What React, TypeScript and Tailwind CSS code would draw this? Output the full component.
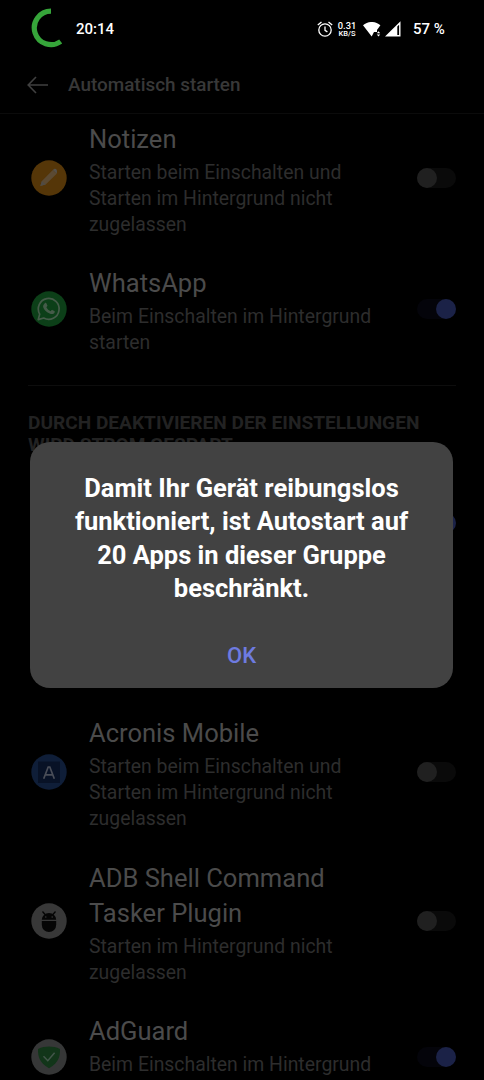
import type { ReactNode } from 'react'

interface AppRow {
  name: string[]
  info: string[]
  enabled: boolean
  icon: ReactNode
}

function NotesIcon() {
  return (
    <svg viewBox="0 0 36 36" className="size-9">
      <circle cx="18" cy="18" r="17.7" fill="#553608" />
      <path d="M9.3 26l1.6-4.9L21.8 10l3.9 3.8-11 10.8z" fill="#5b4a33" />
      <path d="M21.8 10l1.3-1.1c2-.7 3.7 1.1 2.6 4.9z" fill="#54504a" />
      <path d="M9.3 26l1.6-4.9 3.8 3.5z" fill="#4f4b45" />
    </svg>
  )
}

function WhatsAppIcon() {
  return (
    <svg viewBox="0 0 36 36" className="size-9">
      <circle cx="18" cy="18" r="17.7" fill="#0c3f18" />
      <path
        d="M7.2 28.6l1.5-5.5A10.4 10.4 0 1 1 12.7 27z"
        fill="none"
        stroke="#455b49"
        strokeWidth="1.7"
        strokeLinejoin="round"
      />
      <path
        d="M13.8 12.2c.5-.5 1.4-.5 1.7.2l.9 2.1c.2.5-.6 1.2-1 1.7.9 1.8 2.4 3.2 4.3 4 .5-.5 1.1-1.5 1.6-1.3l2.1 1c.7.4.3 1.7-.3 2.3-1 1-2.4 1.1-4 .6-3.6-1.2-6-3.7-6.9-6.5-.4-1.5.3-3 1.6-4.1z"
        fill="#455b49"
      />
    </svg>
  )
}

function AcronisIcon() {
  return (
    <svg viewBox="0 0 36 36" className="size-9">
      <circle cx="18" cy="18" r="17.7" fill="#0f1e38" />
      <rect x="7" y="7.5" width="22" height="21.5" fill="#081226" />
      <path
        d="M12.7 24.8L17.2 13h1.6l4.5 11.8M14 20.8h8"
        fill="none"
        stroke="#4a4e58"
        strokeWidth="1.7"
      />
    </svg>
  )
}

function AdbIcon() {
  return (
    <svg viewBox="0 0 36 36" className="size-9">
      <circle cx="18" cy="18" r="17.7" fill="#383838" />
      <path d="M11.5 8.5l3 3.5M24.5 8.5l-3 3.5" stroke="#050505" strokeWidth="1.3" />
      <path d="M10.8 16.7a7.2 6.6 0 0 1 14.4 0z" fill="#050505" />
      <path d="M10.8 18h14.4v3.8a7.2 7.2 0 0 1-14.4 0z" fill="#050505" />
      <circle cx="14.8" cy="14" r=".8" fill="#383838" />
      <circle cx="21.2" cy="14" r=".8" fill="#383838" />
    </svg>
  )
}

function AdGuardIcon() {
  return (
    <svg viewBox="0 0 36 36" className="size-9">
      <circle cx="18" cy="18" r="17.7" fill="#363737" />
      <path
        d="M18 7.6c3.5 0 7.5.8 11 2.4 0 6.5-.6 13.5-11 19.2C7.6 23.5 7 16.5 7 10c3.5-1.6 7.5-2.4 11-2.4z"
        fill="#123519"
      />
      <path d="M12.5 17.2l4.3 4.5 6.8-8" fill="none" stroke="#43564a" strokeWidth="1.5" />
    </svg>
  )
}

const startApps: AppRow[] = [
  {
    name: ['Notizen'],
    info: ['Starten beim Einschalten und', 'Starten im Hintergrund nicht', 'zugelassen'],
    enabled: false,
    icon: <NotesIcon />,
  },
  {
    name: ['WhatsApp'],
    info: ['Beim Einschalten im Hintergrund', 'starten'],
    enabled: true,
    icon: <WhatsAppIcon />,
  },
]

const groupApps: AppRow[] = [
  {
    name: ['Acronis Mobile'],
    info: ['Starten beim Einschalten und', 'Starten im Hintergrund nicht', 'zugelassen'],
    enabled: false,
    icon: <AcronisIcon />,
  },
  {
    name: ['ADB Shell Command', 'Tasker Plugin'],
    info: ['Starten im Hintergrund nicht', 'zugelassen'],
    enabled: false,
    icon: <AdbIcon />,
  },
  {
    name: ['AdGuard'],
    // second line falls below the fold, keep its height only
    info: ['Beim Einschalten im Hintergrund', '\u00a0'],
    enabled: true,
    icon: <AdGuardIcon />,
  },
]

function Toggle({ on }: { on: boolean }) {
  return (
    <div
      className={
        on
          ? 'flex h-5 w-[39px] shrink-0 justify-end rounded-full bg-[#04040a]'
          : 'flex h-5 w-[39px] shrink-0 rounded-full bg-[#0a0a0a]'
      }
    >
      <div className={on ? 'size-5 rounded-full bg-[#1b2247]' : 'size-5 rounded-full bg-[#202020]'} />
    </div>
  )
}

function Row({ app }: { app: AppRow }) {
  return (
    <div className="flex items-center pr-7 pl-[31px]">
      <div className="shrink-0">{app.icon}</div>
      <div className="ml-[22px] flex-1 pt-1 whitespace-nowrap">
        <div className="text-[25.55px] leading-[35px] text-[#4b4b4b]">
          {app.name.map((line) => (
            <div key={line}>{line}</div>
          ))}
        </div>
        <div className="mt-[3px] text-[19.4px] leading-[26px] text-[#2d2d2d]">
          {app.info.map((line) => (
            <div key={line}>{line}</div>
          ))}
        </div>
      </div>
      <Toggle on={app.enabled} />
    </div>
  )
}

function StatusBar() {
  return (
    <div className="flex h-14 items-center pt-0.5 pl-[31px] text-white">
      <svg viewBox="0 0 40 40" className="mb-[3px] size-10">
        <path d="M20 3.2A16.7 16.7 0 1 0 29.7 33.5" fill="none" stroke="#36a53a" strokeWidth="5.2" />
      </svg>
      <span className="ml-[5px] w-[38px] text-[15px] leading-5 font-medium">20:14</span>
      <svg viewBox="0 0 16 16" className="ml-[203px] size-4" fill="none" stroke="#fff" strokeWidth="1.3">
        <circle cx="8" cy="9" r="6.2" />
        <path d="M.8 4.1L4.5.9M15.2 4.1L11.5.9M8 5.5v3.8l2.4 1.6" />
      </svg>
      <div className="ml-1 w-[20px] text-center font-medium">
        <div className="text-[9.3px] leading-[8px]">0.31</div>
        <div className="text-[7.5px] leading-[7px]">KB/S</div>
      </div>
      <svg viewBox="0 0 18 15" className="ml-[6px] h-[15px] w-[18px]">
        <path d="M0 3.2C5-1.1 12.5-1.1 17.4 3.2L14 8v2h-3l-2.3 4.5z" fill="#fff" />
        <path d="M13.8 11.3l1.7-2 1.7 2zM13.8 12.5l1.7 2 1.7-2z" fill="#fff" />
      </svg>
      <svg viewBox="0 0 16 16" className="ml-1 size-4">
        <path d="M0 15.5L15.5.3v15.2zM12.3 5.5v8.6h1.8V3.8z" fill="#fff" fillRule="evenodd" />
      </svg>
      <span className="ml-3 text-[15px] leading-5 font-medium">57 %</span>
    </div>
  )
}

export default function App() {
  return (
    <div className="relative h-[1080px] w-[484px] overflow-hidden bg-black font-['Roboto','Liberation_Sans',sans-serif]">
      <StatusBar />
      <header className="flex h-[58px] items-center border-b border-[#0b0b0b] pl-[27px]">
        <svg viewBox="0 0 21 18" className="h-[18px] w-[21px]" fill="none" stroke="#404040" strokeWidth="1.6">
          <path d="M21 9H1.2M9 1L1.2 9 9 17" />
        </svg>
        <h1 className="ml-5 text-[18.9px] leading-6 font-medium text-[#383838]">Automatisch starten</h1>
      </header>

      <div className="flex flex-col gap-6 pt-1">
        {startApps.map((app) => (
          <Row key={app.name[0]} app={app} />
        ))}
      </div>

      <div className="mx-7 mt-[29px] border-t border-[#0d0d0d]" />
      <h2 className="mt-[26px] ml-7 text-[19.1px] leading-[22px] font-bold text-[#222222]">
        DURCH DEAKTIVIEREN DER EINSTELLUNGEN
        <br />
        WIRD STROM GESPART
      </h2>

      <div className="mt-5 flex flex-col gap-[24.2px]">
        {/* rows covered by the dialog */}
        <div className="flex h-[94px] items-center justify-end pr-7">
          <Toggle on />
        </div>
        <div className="h-[94px]" />
        {groupApps.map((app) => (
          <Row key={app.name[0]} app={app} />
        ))}
      </div>

      <div
        role="dialog"
        className="absolute top-[442px] left-[30px] flex h-[246px] w-[423px] flex-col items-center rounded-[20px] bg-[#424242] pt-[30px]"
      >
        <p className="text-center text-[25.5px] leading-[33.3px] font-bold whitespace-nowrap text-white">
          Damit Ihr Gerät reibungslos
          <br />
          funktioniert, ist Autostart auf
          <br />
          20 Apps in dieser Gruppe
          <br />
          beschränkt.
        </p>
        <button className="mt-[36px] text-[22px] leading-[30px] font-medium text-[#6e7be0]">OK</button>
      </div>
    </div>
  )
}
